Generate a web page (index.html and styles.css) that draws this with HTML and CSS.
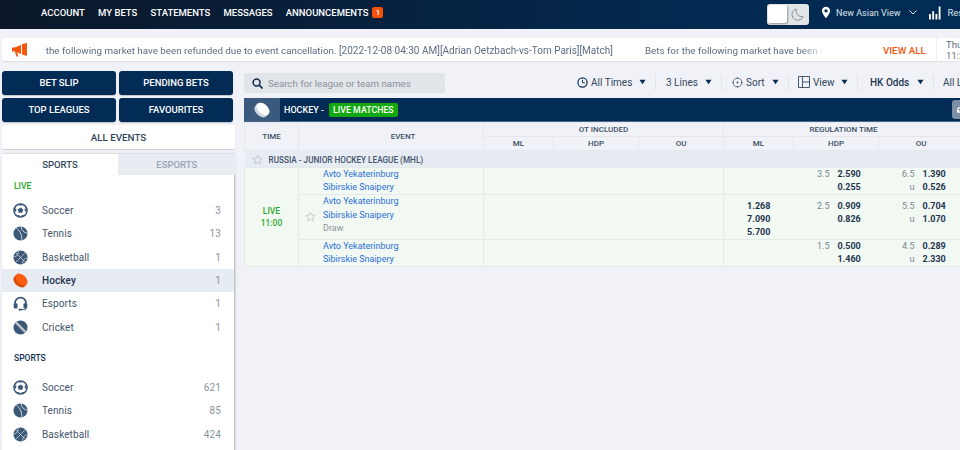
FILE: index.html
```html
<!DOCTYPE html>
<html lang="en">
<head>
<meta charset="utf-8">
<title>Hockey - Live Matches</title>
<link rel="stylesheet" href="styles.css">
</head>
<body>
<svg class="defs" aria-hidden="true">
  <symbol id="soccer" viewBox="0 0 16 16">
    <circle cx="8" cy="8" r="7" fill="#fff" stroke="#3b5877" stroke-width="1.6"/>
    <path d="M8 4.800l3 2.200-1.100 3.500H6.100L5 7z" fill="#3b5877"/>
    <path d="M5 1.500L8 2.800l3-1.300V1H5zM1 6.500l1.200 3.200 1.300-1.400V5.500zM15 6.500l-1.200 3.200-1.300-1.400V5.500zM3.800 13.400l3-.6.400 2.400-2.800-.5zM12.200 13.400l-3-.6-.4 2.400 2.800-.5z" fill="#3b5877"/>
  </symbol>
  <symbol id="tennis" viewBox="0 0 16 16">
    <circle cx="8" cy="8" r="7.500" fill="#3b5877"/>
    <path d="M3.500 2.200C7 4.500 9.200 8 9.600 15M8.500.6c.6 4 3 6.400 6.800 7.200" fill="none" stroke="#fff" stroke-width=".8"/>
  </symbol>
  <symbol id="basket" viewBox="0 0 16 16">
    <circle cx="8" cy="8" r="7.500" fill="#3b5877"/>
    <path d="M2.700 2.700l10.600 10.600M13.300 2.700L2.700 13.300M5.500 .8c.6 3.500-1 6-4.800 6.800M15.300 8.400c-3.800.8-5.400 3.300-4.800 6.800" fill="none" stroke="#fff" stroke-width=".6"/>
  </symbol>
  <symbol id="puck" viewBox="0 0 16 16">
    <g transform="rotate(42 8 8)">
      <path d="M.4 6.500v3.200c0 2.600 3.400 4.700 7.600 4.700s7.600-2.100 7.600-4.700V6.500z" fill="#d94a08"/>
      <ellipse cx="8" cy="6.500" rx="7.600" ry="4.800" fill="#fb5e12"/>
    </g>
  </symbol>
  <symbol id="headset" viewBox="0 0 16 16">
    <path d="M2.200 9.500V7.500a5.800 5.800 0 0 1 11.600 0v2" fill="none" stroke="#3b5877" stroke-width="1.800"/>
    <rect x=".8" y="7.600" width="4" height="5.600" rx="1.300" fill="#3b5877"/>
    <rect x="11.200" y="7.600" width="4" height="5.600" rx="1.300" fill="#3b5877"/>
    <path d="M13.500 13v1.500H8" fill="none" stroke="#3b5877" stroke-width="1"/>
    <rect x="6" y="13.600" width="3.500" height="1.800" fill="#3b5877"/>
  </symbol>
  <symbol id="cricket" viewBox="0 0 16 16">
    <circle cx="8" cy="8" r="7.500" fill="#3b5877"/>
    <path d="M3 2.600L13.400 13" stroke="#b9c0c9" stroke-width="2.600"/>
  </symbol>
  <symbol id="star" viewBox="0 0 16 16">
    <path d="M8 1.600l2 4.300 4.700.6-3.500 3.200.9 4.700L8 12.100l-4.100 2.300.9-4.700L1.300 6.500 6 5.900z" fill="none" stroke="#b4b9c0" stroke-width="1"/>
  </symbol>
  <symbol id="caret" viewBox="0 0 8 6"><path d="M.5.500h7L4 5.500z" fill="#0b2d52"/></symbol>
</svg>

<header class="topbar">
  <nav class="topnav">
    <a>ACCOUNT</a><a>MY BETS</a><a>STATEMENTS</a><a>MESSAGES</a>
    <a class="has-badge">ANNOUNCEMENTS <span class="badge">1</span></a>
  </nav>
  <div class="toptools">
    <div class="toggle">
      <span class="knob"></span>
      <svg class="moon" viewBox="0 0 14 14"><path d="M5.500 1A6.200 6.200 0 1 0 13 9.500 7 7 0 0 1 5.500 1z" fill="none" stroke="#7d8893" stroke-width="1"/></svg>
    </div>
    <div class="viewpick">
      <svg class="pin" viewBox="0 0 12 14"><path fill-rule="evenodd" d="M6 0a5 5 0 0 1 5 5c0 3.400-5 9-5 9S1 8.400 1 5a5 5 0 0 1 5-5zm0 3a2 2 0 1 0 0 4 2 2 0 0 0 0-4z" fill="#fff"/></svg>
      <span>New Asian View</span>
      <svg class="chev" viewBox="0 0 8 5"><path d="M.5.500L4 4l3.500-3.500" fill="none" stroke="#dfe5ec" stroke-width="1"/></svg>
    </div>
    <div class="results">
      <svg class="bars" viewBox="0 0 13 14"><path d="M0 8h2v6H0zM3.500 5h2v9h-2zM7 8h2v6H7zM10.500 0h2v14h-2z" fill="#fff"/></svg>
      <span>Results</span>
    </div>
  </div>
</header>

<section class="ticker">
  <svg class="horn" viewBox="0 0 16 14"><path d="M0 4.500h2.500L9 2v9L2.500 8.500H0zM2.800 9l1.700 4.500h2L5 9.500zM10 1l5-1v13l-5-1.500z" fill="#f4580f"/></svg>
  <div class="ticker-clip">
    <div class="ticker-text"><span><span class="prose">Bets for the following market have been refunded due to event cancellation. </span>[2022-12-08 04:30 AM][Adrian Oetzbach-vs-Tom Paris][Match]</span><span class="prose">Bets for the following market have been refunded due to event cancellation.</span></div>
  </div>
  <a class="viewall">VIEW ALL</a>
  <div class="clock">Thu<br>11:2</div>
</section>

<div class="content">
  <aside class="side">
    <div class="btns">
      <button>BET SLIP</button><button>PENDING BETS</button>
      <button>TOP LEAGUES</button><button>FAVOURITES</button>
    </div>
    <div class="allev">ALL EVENTS</div>
    <div class="panel">
      <div class="tabs"><div class="tab on">SPORTS</div><div class="tab">ESPORTS</div></div>
      <h3 class="live-h">LIVE</h3>
      <ul class="sports">
        <li><svg class="ic"><use href="#soccer"/></svg><span>Soccer</span><em>3</em></li>
        <li><svg class="ic"><use href="#tennis"/></svg><span>Tennis</span><em>13</em></li>
        <li><svg class="ic"><use href="#basket"/></svg><span>Basketball</span><em>1</em></li>
        <li class="cur"><svg class="ic"><use href="#puck"/></svg><span>Hockey</span><em>1</em></li>
        <li><svg class="ic"><use href="#headset"/></svg><span>Esports</span><em>1</em></li>
        <li><svg class="ic"><use href="#cricket"/></svg><span>Cricket</span><em>1</em></li>
      </ul>
      <h3 class="sp-h">SPORTS</h3>
      <ul class="sports">
        <li><svg class="ic"><use href="#soccer"/></svg><span>Soccer</span><em>621</em></li>
        <li><svg class="ic"><use href="#tennis"/></svg><span>Tennis</span><em>85</em></li>
        <li><svg class="ic"><use href="#basket"/></svg><span>Basketball</span><em>424</em></li>
      </ul>
    </div>
  </aside>

  <main class="main">
    <div class="filters">
      <div class="search">
        <svg class="mag" viewBox="0 0 12 12"><circle cx="5" cy="5" r="3.800" fill="none" stroke="#0b2d52" stroke-width="1.600"/><path d="M8 8l3.500 3.500" stroke="#0b2d52" stroke-width="1.800"/></svg>
        <span>Search for league or team names</span>
      </div>
      <div class="opts">
        <div class="opt o1"><svg class="oi" viewBox="0 0 12 12"><circle cx="6" cy="6" r="5" fill="none" stroke="#0b2d52" stroke-width="1.300"/><path d="M6 3v3.300h2.600" fill="none" stroke="#0b2d52" stroke-width="1"/></svg><span>All Times</span><svg class="car"><use href="#caret"/></svg></div>
        <div class="opt o2"><span>3 Lines</span><svg class="car"><use href="#caret"/></svg></div>
        <div class="opt o3"><svg class="oi" viewBox="0 0 12 12"><circle cx="6" cy="6" r="4.800" fill="none" stroke="#33475c" stroke-width=".8"/><circle cx="6" cy="6" r="1" fill="#33475c"/><path d="M6 .5v1.500M.5 6H2M6 10v1.500M10 6h1.500" stroke="#33475c" stroke-width=".8"/></svg><span>Sort</span><svg class="car"><use href="#caret"/></svg></div>
        <div class="opt o4"><svg class="oi wide" viewBox="0 0 12 12"><path d="M.5.500h11v11H.5zM4.500.500v11M4.500 6h7" fill="none" stroke="#33475c" stroke-width=".9"/></svg><span>View</span><svg class="car"><use href="#caret"/></svg></div>
        <div class="opt o5"><span class="strong">HK Odds</span><svg class="car"><use href="#caret"/></svg></div>
        <div class="opt o6"><span>All Leagues</span></div>
      </div>
    </div>

    <div class="board">
      <div class="board-head">
        <div class="board-ic">
          <svg viewBox="0 0 16 16"><g transform="rotate(42 8 8)"><path d="M.4 6.500v3.200c0 2.600 3.400 4.700 7.600 4.700s7.600-2.100 7.600-4.700V6.500z" fill="#cfd8e2"/><ellipse cx="8" cy="6.500" rx="7.600" ry="4.800" fill="#fff"/></g></svg>
        </div>
        <span class="board-t">HOCKEY -</span>
        <span class="livetag">LIVE MATCHES</span>
        <span class="refresh"><svg viewBox="0 0 8 8"><path d="M1 4a3 3 0 0 1 5-2.200L7 1v3H4l1.200-1.200A2 2 0 0 0 2 4zM7 4a3 3 0 0 1-5 2.200L1 7V4h3L2.800 5.200A2 2 0 0 0 6 4z" fill="#fff"/></svg></span>
      </div>
      <table class="odds">
        <colgroup><col class="c-time"><col class="c-event"><col class="c-ml"><col class="c-v"><col class="c-v"><col class="c-ml"><col class="c-v"><col class="c-v"></colgroup>
        <thead>
          <tr class="h1"><th rowspan="2">TIME</th><th rowspan="2" class="th-ev">EVENT</th><th colspan="3">OT INCLUDED</th><th colspan="3">REGULATION TIME</th></tr>
          <tr class="h2"><th>ML</th><th>HDP</th><th>OU</th><th>ML</th><th>HDP</th><th>OU</th></tr>
        </thead>
        <tbody>
          <tr class="league"><td colspan="8"><div class="lg"><svg class="st"><use href="#star"/></svg>RUSSIA - JUNIOR HOCKEY LEAGUE (MHL)</div></td></tr>
          <tr class="r">
            <td class="tm" rowspan="3">LIVE<br>11:00</td>
            <td class="ev"><a>Avto Yekaterinburg</a><a>Sibirskie Snaipery</a></td>
            <td colspan="3" class="ot"></td><td class="ml"></td>
            <td class="hd"><div class="pr"><i>3.5</i><b>2.590</b><i></i><b>0.255</b></div></td>
            <td class="ou"><div class="pr"><i>6.5</i><b>1.390</b><i>u</i><b>0.526</b></div></td>
          </tr>
          <tr class="r r-mid">
            <td class="ev"><svg class="st ev-st"><use href="#star"/></svg><a>Avto Yekaterinburg</a><a>Sibirskie Snaipery</a><span class="draw">Draw</span></td>
            <td colspan="3" class="ot"></td>
            <td class="ml"><b>1.268</b><b>7.090</b><b>5.700</b></td>
            <td class="hd"><div class="pr"><i>2.5</i><b>0.909</b><i></i><b>0.826</b></div></td>
            <td class="ou"><div class="pr"><i>5.5</i><b>0.704</b><i>u</i><b>1.070</b></div></td>
          </tr>
          <tr class="r">
            <td class="ev"><a>Avto Yekaterinburg</a><a>Sibirskie Snaipery</a></td>
            <td colspan="3" class="ot"></td><td class="ml"></td>
            <td class="hd"><div class="pr"><i>1.5</i><b>0.500</b><i></i><b>1.460</b></div></td>
            <td class="ou"><div class="pr"><i>4.5</i><b>0.289</b><i>u</i><b>2.330</b></div></td>
          </tr>
        </tbody>
      </table>
    </div>
  </main>
</div>
</body>
</html>
```
FILE: styles.css
```css
* { box-sizing: border-box; }
html, body { margin: 0; height: 450px; overflow: hidden; }
body { background: #f0f2f7; font-family: Roboto, "Liberation Sans", sans-serif; color: #33475c; font-size: 10px; }
.defs { display: none; }
ul { list-style: none; margin: 0; padding: 0; }
h3 { margin: 0; }

.topbar { height: 29px; display: flex; justify-content: space-between; align-items: center; background: linear-gradient(90deg, #0b1728 0%, #03294f 70%, #022c55 100%); color: #fff; }
.topnav { display: flex; gap: 13.250px; padding: 0 0 5px 41px; font-size: 9.500px; font-weight: 500; align-items: center; }
.has-badge { display: flex; align-items: center; gap: 4px; }
.badge { width: 11px; height: 11px; background: #f5510b; border-radius: 2px; font-size: 8px; text-align: center; line-height: 11px; }
.toptools { display: flex; align-items: center; width: 193px; flex: none; height: 100%; }
.toggle { width: 42px; height: 21px; flex: none; margin-top: -1px; background: #e1e5e8; border-radius: 3px; padding: 1px; display: flex; align-items: center; justify-content: space-between; }
.knob { width: 19px; height: 18px; background: #fff; border-radius: 2px; box-shadow: 1px 1px 2px rgba(0,0,0,.35); }
.moon { width: 13px; height: 13px; margin-right: 4px; }
.viewpick { display: flex; flex: none; align-items: center; margin-left: 12px; margin-top: -4px; color: #dfe5ec; font-size: 9px; white-space: nowrap; }
.pin { width: 10px; height: 13px; margin-right: 5px; }
.chev { width: 8px; height: 5px; margin-left: 9px; }
.results { display: flex; flex: none; align-items: center; margin-left: 12px; margin-top: -4px; color: #dfe5ec; font-size: 9.500px; }
.bars { width: 12px; height: 14px; margin-right: 6px; }

.ticker { height: 23px; margin: 9px 0 0 2px; background: #fff; border-radius: 2px; display: flex; align-items: center; box-shadow: 0 1px 1px rgba(0,0,0,.08); overflow: hidden; }
.horn { width: 16px; height: 14px; margin-left: 10px; flex: none; }
.ticker-clip { width: 782px; margin-left: 14px; padding-top: 1px; overflow: hidden; flex: none; -webkit-mask-image: linear-gradient(90deg, transparent 0, #000 4px, #000 760px, transparent 782px); mask-image: linear-gradient(90deg, transparent 0, #000 4px, #000 760px, transparent 782px); }
.ticker-text { display: flex; gap: 32px; margin-left: -33px; white-space: nowrap; font-size: 10px; color: #5c6d82; width: max-content; }
.prose { font-size: 9.800px; }
.viewall { margin-left: 59px; width: 53px; flex: none; color: #f4580f; font-weight: 500; font-size: 9.800px; white-space: nowrap; padding-top: 1px; }
.clock { padding-left: 9px; border-left: 1px solid #eceef2; height: 100%; font-size: 9.500px; line-height: 11px; color: #5c6d82; flex: none; padding-top: 1px; }

.content { display: flex; margin-top: 10px; align-items: flex-start; }
.side { width: 233px; margin-left: 2px; flex: none; }
.btns { display: grid; grid-template-columns: 114px 114px; gap: 3px; }
.btns button { height: 24px; border: 0; background: #022c55; color: #fff; font: 500 9.500px Roboto, "Liberation Sans", sans-serif; border-radius: 3px; padding: 0 0 1px; box-shadow: 0 1px 1px rgba(0,0,0,.2); }
.allev { height: 24px; margin-top: 3px; background: #fff; border-radius: 2px; text-align: center; line-height: 25px; font-weight: 500; color: #33475c; box-shadow: 0 1px 1px rgba(0,0,0,.15); font-size: 9.800px; }
.panel { margin-top: 5px; background: #fff; width: 232px; height: 300px; box-shadow: 1px 0 2px rgba(0,0,0,.28); }
.tabs { display: flex; height: 21px; width: 233.500px; }
.tab { flex: 1; text-align: center; line-height: 21px; font-weight: 500; color: #9aa5b3; background: #e7ebf2; font-size: 9.500px; }
.tab.on { background: #fff; color: #33475c; flex: 0 0 116px; }
.live-h { font-size: 8.500px; font-weight: 500; color: #1ea81a; padding: 6px 0 0 12px; height: 24px; line-height: 11px; }
.sports li { height: 23.330px; display: flex; align-items: center; padding: 0 13px 0 11px; font-size: 10px; color: #44566b; letter-spacing: .1px; }
.sports li.cur { background: #e7ebf2; color: #1f3650; font-weight: 500; }
.sports li span { flex: 1; margin-left: 14px; }
.sports em { font-style: normal; color: #8b939d; }
.sports li.cur em { font-weight: 400; }
.ic { width: 15px; height: 15px; flex: none; }
.sp-h { font-size: 8.500px; font-weight: 500; color: #0f3158; padding: 14px 0 0 12px; height: 37px; line-height: 11px; }

.main { margin-left: 9px; width: 716px; flex: none; overflow: hidden; }
.filters { height: 27px; display: flex; align-items: flex-start; }
.search { width: 201px; height: 20px; margin-top: 2px; background: #e1e4e8; border-radius: 2px; display: flex; align-items: center; padding-left: 8px; color: #8b939d; font-size: 9.700px; flex: none; }
.mag { width: 11px; height: 11px; margin-right: 5px; }
.opts { display: flex; margin: 2px 0 0 132px; font-size: 10px; color: #33475c; align-items: center; height: 18px; }
.opt { display: flex; align-items: center; height: 16px; border-right: 1px solid #e1e4e9; flex: none; white-space: nowrap; }
.o1 { width: 79px; }
.o2 { width: 66px; padding-left: 10px; }
.o3 { width: 67px; padding-left: 10px; }
.o4 { width: 69px; padding-left: 9px; }
.o5 { width: 76px; padding-left: 12px; }
.o6 { border-right: 0; padding-left: 9px; }
.oi { width: 11px; height: 11px; margin-right: 3px; flex: none; }
.oi.wide { width: 12px; height: 12px; }
.car { width: 7px; height: 6px; margin-left: auto; margin-right: 9px; flex: none; }
.strong { font-weight: 500; color: #1f3650; }

.board { width: 719px; }
.board-head { height: 24px; background: #022c55; display: flex; align-items: center; color: #fff; border-bottom: 1px solid #4b6a8a; }
.board-ic { width: 36px; height: 23px; background: #3a5a7d; display: flex; align-items: center; justify-content: center; }
.board-ic svg { width: 16px; height: 16px; }
.board-t { margin-left: 4px; font-weight: 500; font-size: 9px; }
.livetag { margin-left: 5px; height: 14px; padding: 0 4px; line-height: 14px; background: #12a80f; border-radius: 2px; font-weight: 500; font-size: 8.800px; }
.refresh { margin-left: auto; width: 11px; height: 19px; background: #7c8fa5; border-radius: 3px 0 0 3px; display: flex; align-items: center; padding-left: 4px; }
.refresh svg { width: 8px; height: 8px; flex: none; }

.odds { width: 719px; table-layout: fixed; border-collapse: collapse; font-size: 9px; }
.c-time { width: 54px; }
.c-event { width: 185px; }
.c-ml { width: 70px; }
.c-v { width: 85px; }
.odds th { padding: 0; font-weight: 500; font-size: 8px; color: #3f5166; border: 1px solid #e4e7ec; text-align: center; }
.odds .th-ev { padding-left: 24px; }
.h1 th { height: 14px; }
.h2 th { height: 14px; }
.league td { background: #e7ebf3; padding: 0; height: 17px; }
.lg { display: flex; align-items: center; font-size: 8.200px; font-weight: 500; color: #44566b; padding-top: 1px; }
.st { width: 11px; height: 11px; flex: none; }
.lg .st { margin: 0 6px 0 7px; }
.r td { background: #f2f8f2; padding: 0; border-top: 1px solid #e3ebe6; border-bottom: 1px solid #e3ebe6; vertical-align: top; }
.odds .tm { color: #2fa92c; text-align: center; font-size: 8.500px; font-weight: 500; line-height: 12px; vertical-align: middle; border: 1px solid #e3ebe6; }
.odds .ev { padding-left: 24px; position: relative; border-right: 1px solid #e3ebe6; }
.odds .ot { border-right: 1px solid #e3ebe6; }
.ev a { display: block; color: #2a6fd8; line-height: 13.200px; white-space: nowrap; }
.draw { display: block; color: #8b939d; line-height: 13.200px; padding-bottom: 3px; }
.ev-st { position: absolute; left: 6px; top: 16px; }
.ml b { display: block; text-align: center; line-height: 13px; font-weight: 700; color: #1f3650; }
.r-mid .ml { padding-top: 4.500px; }
.pr { display: grid; grid-template-columns: 1fr 23px; column-gap: 8px; padding-right: 18px; line-height: 13.200px; }
.r-mid .pr { padding-top: 4.500px; line-height: 13.500px; }
.pr i { font-style: normal; color: #7c8793; text-align: right; }
.pr b { font-weight: 700; color: #1f3650; text-align: right; }
```
